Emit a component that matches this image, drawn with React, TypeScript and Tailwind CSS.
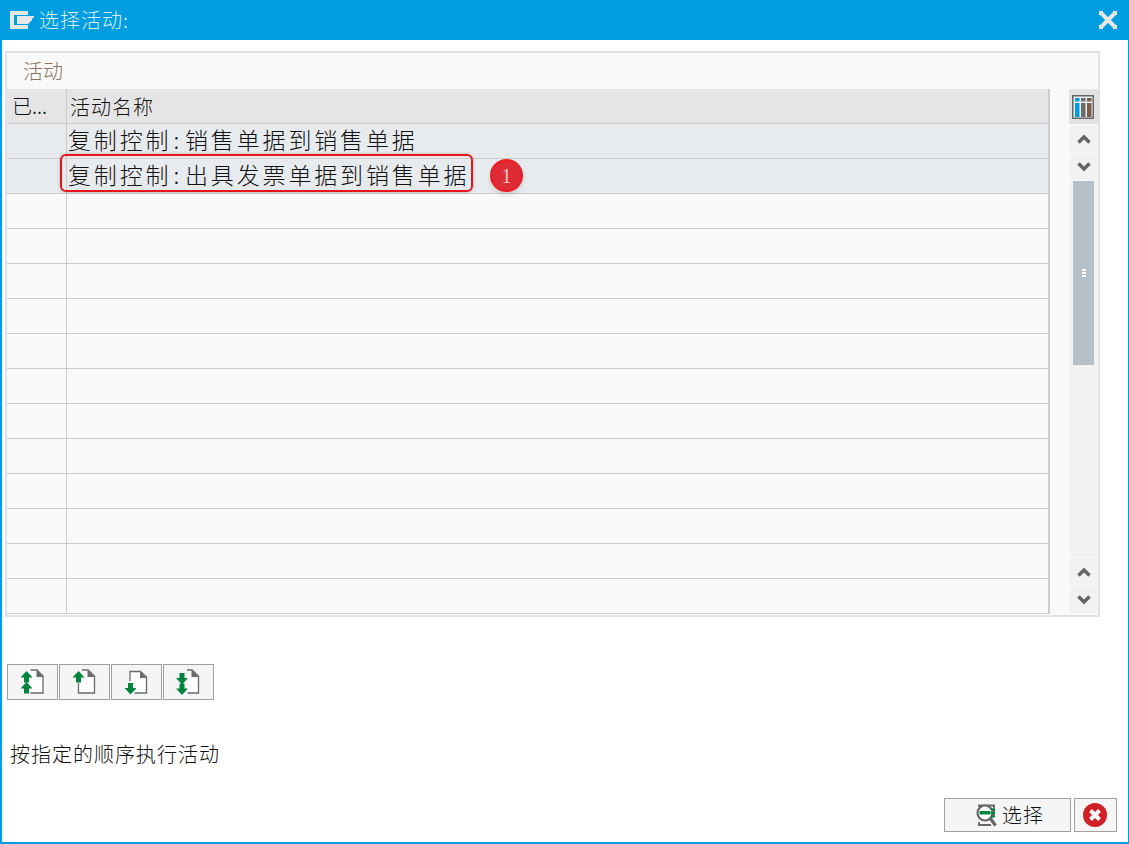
import React from 'react';

const cjk = { fontFamily: '"Noto Sans CJK SC", sans-serif' };

const emptyRows = Array.from({ length: 12 });

const green = '#00843d';

// x/y = top-left of the arrow's box (10 wide, 11 tall)
const Arrow = ({ x, y, up }: { x: number; y: number; up?: boolean }) => (
  <path
    d={
      up
        ? `M${x + 5} ${y}l6 6.500H${x + 7.5}v5h-5v-5H${x - 1}z`
        : `M${x + 5} ${y + 11.5}l6-6.500H${x + 7.5}V${y}h-5v${5}H${x - 1}z`
    }
    fill={green}
  />
);

const DocIcon = ({ variant }: { variant: 'first' | 'prev' | 'next' | 'last' }) => {
  const sheet = {
    first: 'M10.500 1H17l6 6v17H10.500z',
    prev: 'M10 1h6l6.500 6v17h-16v-10h3.500V1z',
    next: 'M6 2.500h10.500l6 5.500v16h-12V13H6z',
    last: 'M11 1h5l6.500 6v17h-11z',
  }[variant];
  const edge = {
    first: 'M10.500 1H17l6 6v17H10.500',
    prev: 'M10 1h6l6.500 6v17h-16V14',
    next: 'M6 12V2.500h10.500l6 5.500v16h-12',
    last: 'M11 1h5l6.500 6v17h-11',
  }[variant];
  const ear = {
    first: 'M16.500 1l7 7h-7z',
    prev: 'M15.500 1l7 7h-7z',
    next: 'M16 2.500l6.500 6.500H16z',
    last: 'M15.500 1l7 7h-7z',
  }[variant];
  return (
    <svg width="26" height="26" viewBox="0 0 26 26">
      <path d={sheet} fill="#fff" />
      <path d={edge} fill="none" stroke="#6b6b6b" strokeWidth="1.300" />
      <path d={ear} fill="#6b6b6b" />
      {variant === 'first' && (
        <>
          <Arrow x={1.5} y={2} up />
          <Arrow x={1.5} y={13} up />
        </>
      )}
      {variant === 'prev' && <Arrow x={1.5} y={2} up />}
      {variant === 'next' && <Arrow x={1.5} y={14} />}
      {variant === 'last' && (
        <>
          <Arrow x={1} y={4} />
          <Arrow x={1} y={14.5} />
        </>
      )}
    </svg>
  );
};

const Chevron = ({ up }: { up?: boolean }) => (
  <svg width="14" height="10" viewBox="0 0 14 10">
    <path d={up ? 'M1.500 8.500L7 3l5.500 5.500' : 'M1.500 1.500L7 7l5.500-5.500'} fill="none" stroke="#666" strokeWidth="3.500" />
  </svg>
);

const ScrollBtn = ({ up }: { up?: boolean }) => (
  <div className="h-[27px] w-[27px] bg-[#f2f2f2] flex items-center justify-center">
    <Chevron up={up} />
  </div>
);

const Row = ({ head, tail, filled }: { head?: string; tail?: string; filled?: boolean }) => (
  <div className={`flex h-[35px] border-b border-r-2 border-[#cccccc] ${filled ? 'bg-[#e8ebee]' : 'bg-[#f9f9f9]'}`}>
    <div className="w-[60px] border-r border-[#cccccc] shrink-0" />
    {head && (
      <div className="flex-1 pl-[1px] pb-[4px] flex items-center text-[23px] tracking-[2.85px] text-[#111] font-light whitespace-nowrap">
        {head}
        <span className="ml-[2px] mr-[3px]">:</span>
        {tail}
      </div>
    )}
  </div>
);

export default function App() {
  return (
    <div style={cjk} className="w-[1129px] h-[844px] flex flex-col bg-white border-l-2 border-r border-b-2 border-[#009de0] overflow-hidden">
      <div className="h-[40px] -ml-[2px] -mr-[1px] shrink-0 bg-[#009de0] flex items-center pl-[10px] pr-[12px] text-white">
        <svg width="24" height="18" viewBox="0 0 24 18">
          <path d="M0 0h18v4H4v10h14v4H0z" fill="#e6e6e6" />
          <path d="M7 5h17v1.500l-2 1v2l-2 1v1l-2 1.500H7z" fill="#e6e6e6" />
        </svg>
        <span className="ml-[5px] text-[20px] tracking-[1px] font-light text-[#d9eef9]">选择活动:</span>
        <svg className="ml-auto" width="18" height="18" viewBox="0 0 18 18">
          <path d="M2 2l14 14M16 2L2 16" stroke="#e6e6e6" strokeWidth="4" />
          <path d="M0 0h4v4H0zM14 0h4v4h-4zM0 14h4v4H0zM14 14h4v4h-4z" fill="#e6e6e6" />
        </svg>
      </div>

      <div className="ml-[3px] mt-[11px] w-[1095px] h-[566px] border-2 border-[#e2e2e2] bg-[#f9f9f9] flex flex-col">
        <div className="h-[36px] pl-[16px] flex items-center text-[20px] font-light text-[#8a7460]">活动</div>
        <div className="flex">
          <div className="w-[1043px] relative">
            <div className="flex h-[35px] bg-[#e5e5e5] border-b border-r-2 border-[#cccccc] text-[20px] font-light text-[#111]">
              <div className="w-[60px] border-r border-[#cccccc] pl-[5px] flex items-center shrink-0">已...</div>
              <div className="flex-1 pl-[3px] pt-[2px] flex items-center tracking-[1px]">活动名称</div>
            </div>
            <Row filled head="复制控制" tail="销售单据到销售单据" />
            <Row filled head="复制控制" tail="出具发票单据到销售单据" />
            {emptyRows.map((_, i) => (
              <Row key={i} />
            ))}
            <div className="absolute left-[53px] top-[65px] w-[413px] h-[38px] rounded-[6px] border-2 border-[#e8141c] shadow-[0_0_3px_rgba(0,0,0,0.3)]" />
            <div className="absolute left-[483px] top-[70px] w-[33px] h-[33px] rounded-full bg-[#de2c36] border-2 border-[#f01c24] shadow-md flex items-center justify-center text-[#f6c9cc] text-[20px] font-['Liberation_Serif',serif]">
              1
            </div>
          </div>
          <div className="ml-[19px] w-[29px] flex flex-col items-center">
            <div className="h-[35px] w-[29px] bg-[#e2e2e2] flex items-center justify-center pr-[2px]">
              <svg width="22" height="24" viewBox="0 0 22 24">
                <rect width="22" height="24" fill="#666" />
                <rect x="1.500" y="1.500" width="19" height="21" fill="#e8eef2" />
                <rect x="3" y="3" width="4.500" height="3.500" fill="#009de0" />
                <rect x="3" y="8" width="4.500" height="14" fill="#009de0" />
                <rect x="9" y="3" width="4.500" height="3.500" fill="#6d6d6d" />
                <rect x="9" y="8" width="4.500" height="14" fill="#6d6d6d" />
                <rect x="15" y="3" width="4.500" height="3.500" fill="#775f50" />
                <rect x="15" y="8" width="4.500" height="14" fill="#775f50" />
              </svg>
            </div>
            <div className="mt-[1px] flex flex-col gap-[1px]">
              <ScrollBtn up />
              <ScrollBtn />
            </div>
            <div className="mt-[1px] w-[27px] h-[376px] bg-[#f2f2f2] flex justify-center">
              <div className="w-[21px] h-[184px] bg-[#b6c0c9] flex flex-col items-center justify-center gap-[1px]">
                <div className="w-[4px] h-[2px] bg-white" />
                <div className="w-[4px] h-[2px] bg-white" />
                <div className="w-[4px] h-[2px] bg-white" />
              </div>
            </div>
            <div className="mt-[1px] flex flex-col gap-[1px]">
              <ScrollBtn up />
              <ScrollBtn />
            </div>
          </div>
        </div>
      </div>

      <div className="ml-[5px] mt-[47px] flex gap-[1px]">
        {(['first', 'prev', 'next', 'last'] as const).map((v) => (
          <div key={v} className="w-[51px] h-[36px] bg-[#f5f5f5] border border-[#a0a0a0] flex items-center justify-center">
            <DocIcon variant={v} />
          </div>
        ))}
      </div>

      <div className="ml-[8px] mt-[40px] text-[20px] tracking-[1px] font-light text-[#111] leading-[28px]">按指定的顺序执行活动</div>

      <div className="mt-auto mb-[10px] mr-[11px] flex justify-end gap-[3px]">
        <div className="w-[127px] h-[34px] bg-[#f5f5f5] border border-[#a0a0a0] flex items-center pl-[31px] text-[20px] font-light text-[#111] tracking-[1px]">
          <svg width="24" height="24" viewBox="0 0 24 24" className="mr-[2px]">
            <path d="M3 4V2.500h15V14" fill="none" stroke="#666" strokeWidth="1.800" />
            <path d="M3 19v3h12" fill="none" stroke="#666" strokeWidth="1.800" />
            <circle cx="9" cy="10" r="7.500" fill="#fff" stroke="#666" strokeWidth="2.200" />
            <rect x="3.500" y="8" width="11" height="3.500" fill={green} />
            <path d="M15 5.500h4v2h-4zM15 9h4v2h-4zM15 12.500h4v2h-4z" fill={green} />
            <path d="M14 15l5.500 7.500" stroke="#666" strokeWidth="3.200" />
          </svg>
          选择
        </div>
        <div className="w-[43px] h-[34px] bg-[#f5f5f5] border border-[#a0a0a0] flex items-center justify-center pr-[1px]">
          <svg width="24" height="24" viewBox="0 0 24 24">
            <circle cx="12" cy="12" r="12" fill="#d01f25" />
            <path d="M7.500 7.500l9 9M16.500 7.500l-9 9" stroke="#fff" strokeWidth="4" />
          </svg>
        </div>
      </div>
    </div>
  );
}
